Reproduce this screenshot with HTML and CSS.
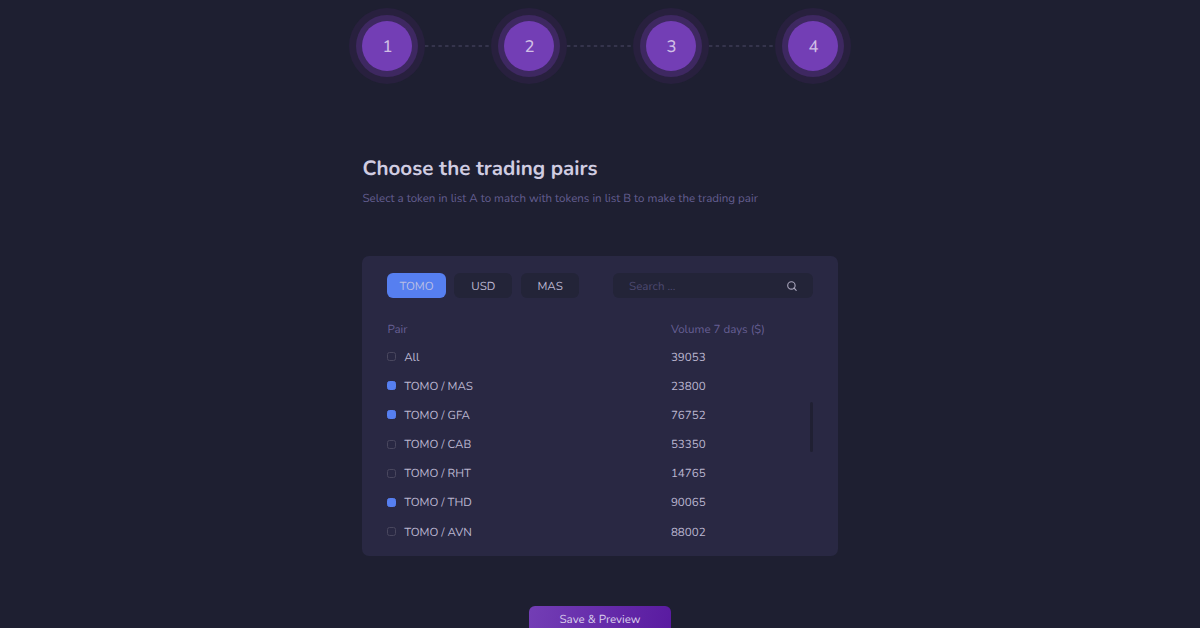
FILE: index.html
```html
<!DOCTYPE html>
<html lang="en">
<head>
<meta charset="utf-8">
<title>Choose the trading pairs</title>
<link rel="stylesheet" href="styles.css">
</head>
<body>
<main class="page">
  <nav class="steps">
    <span class="step">1</span>
    <svg class="link" viewBox="0 0 64 2"><path d="M0 1H64"/></svg>
    <span class="step">2</span>
    <svg class="link" viewBox="0 0 64 2"><path d="M0 1H64"/></svg>
    <span class="step">3</span>
    <svg class="link" viewBox="0 0 64 2"><path d="M0 1H64"/></svg>
    <span class="step">4</span>
  </nav>
  <h1 class="title">Choose the trading pairs</h1>
  <p class="subtitle">Select a token in list A to match with tokens in list B to make the trading pair</p>
  <section class="panel">
    <div class="toolbar">
      <button class="tab tab-active">TOMO</button>
      <button class="tab">USD</button>
      <button class="tab">MAS</button>
      <div class="search">
        <span class="placeholder">Search ...</span>
        <svg class="search-icon" viewBox="0 0 10 10"><circle cx="4.4" cy="4.4" r="3.7"/><path d="M7 7L9.2 9.3"/></svg>
      </div>
    </div>
    <div class="head"><span class="col-pair">Pair</span><span>Volume 7 days ($)</span></div>
    <div class="list">
      <div class="rows">
        <div class="row"><i class="box"></i><span class="pair">All</span><span class="volume">39053</span></div>
        <div class="row"><i class="box checked"></i><span class="pair">TOMO / MAS</span><span class="volume">23800</span></div>
        <div class="row"><i class="box checked"></i><span class="pair">TOMO / GFA</span><span class="volume">76752</span></div>
        <div class="row"><i class="box"></i><span class="pair">TOMO / CAB</span><span class="volume">53350</span></div>
        <div class="row"><i class="box"></i><span class="pair">TOMO / RHT</span><span class="volume">14765</span></div>
        <div class="row"><i class="box checked"></i><span class="pair">TOMO / THD</span><span class="volume">90065</span></div>
        <div class="row"><i class="box"></i><span class="pair">TOMO / AVN</span><span class="volume">88002</span></div>
      </div>
      <div class="scrollbar"></div>
    </div>
  </section>
  <button class="save">Save &amp; Preview</button>
</main>
</body>
</html>
```
FILE: styles.css
```css
* { box-sizing: border-box; }
html { height: 100%; overflow: hidden; }
body {
  margin: 0;
  height: 100%;
  overflow: hidden;
  background: #1e1f31;
  color: #bbb6d0;
  font: 11.57px/16px Nunito, Lato, "Noto Sans", sans-serif;
  text-rendering: geometricPrecision;
}
button { border: 0; padding: 0; font: inherit; color: inherit; text-rendering: inherit; }
.page {
  width: 475.2px;
  margin-left: 362.4px;
  padding-top: 20.7px;
  display: flex;
  flex-direction: column;
}
.steps { display: flex; align-items: center; justify-content: space-between; width: 476px; height: 50px; }
.step {
  width: 50px;
  height: 50px;
  border-radius: 50%;
  background: #733eb5;
  box-shadow: 0 0 0 6px #3e2861, 0 0 0 13px #28203e;
  color: #d0bee5;
  font-size: 16.67px;
  font-weight: 500;
  line-height: 51px;
  text-align: center;
}
.link { width: 64px; height: 2px; margin-right: 2px; fill: none; stroke: #4d4b69; stroke-width: 1; stroke-dasharray: 3.4 3.3; }
.title {
  margin: 85px 0 0;
  font-size: 20.6px;
  line-height: 26px;
  font-weight: 700;
  color: #d0cce1;
  white-space: nowrap;
}
.subtitle { margin: 9.8px 0 0; color: #645e90; white-space: nowrap; }
.panel {
  height: 300px;
  margin-top: 49px;
  padding: 17px 25px 0;
  border-radius: 7px;
  background: #292843;
}
.toolbar { display: flex; height: 25px; gap: 8.5px; }
.tab { width: 58.3px; padding-top: 1px; border-radius: 6px; background: #232438; line-height: 26px; color: #bbb6d0; }
.tab-active { background: #567ff0; color: #b9bee5; }
.search {
  width: 200px;
  margin-left: auto;
  padding: 0 16px 0 16.5px;
  display: flex;
  align-items: center;
  justify-content: space-between;
  border-radius: 6px;
  background: #232438;
}
.placeholder { color: #4d4970; padding-top: 2px; }
.search-icon { width: 10px; height: 10px; fill: none; stroke: #aaa6bd; stroke-width: 1.1; stroke-linecap: round; }
.head { display: flex; margin-top: 23.6px; color: #665f93; }
.col-pair { width: 283.5px; }
.list { display: flex; justify-content: space-between; margin-top: 4px; }
.row { display: flex; align-items: center; height: 29.17px; }
.box { width: 9px; height: 9px; border: 1px solid #49475e; border-radius: 2.5px; }
.checked { border-color: #567ff0; background: #567ff0; }
.pair { width: 266.7px; margin-left: 7.8px; }
.pair, .volume { padding-top: 2px; }
.volume { width: 60px; }
.scrollbar { width: 3px; height: 50px; margin-top: 60px; border-radius: 2px; background: #202033; }
.save {
  width: 142px;
  height: 40px;
  flex: none;
  margin: 49.8px auto 0;
  padding-bottom: 12.5px;
  border-radius: 6px;
  background: linear-gradient(100deg, #733eb5, #591aa0);
  color: #d9cfeb;
}
```
